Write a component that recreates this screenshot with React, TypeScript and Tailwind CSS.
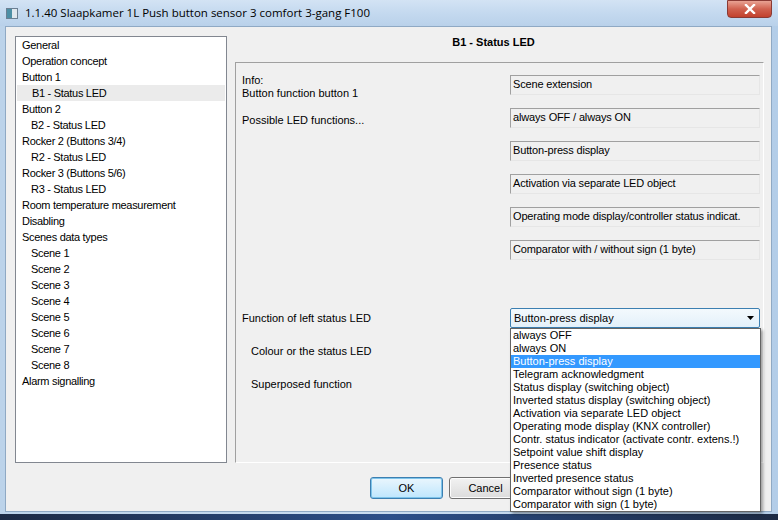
import React from "react";

const tree: { label: string; indent?: boolean; selected?: boolean }[] = [
  { label: "General" },
  { label: "Operation concept" },
  { label: "Button 1" },
  { label: "B1 - Status LED", indent: true, selected: true },
  { label: "Button 2" },
  { label: "B2 - Status LED", indent: true },
  { label: "Rocker 2 (Buttons 3/4)" },
  { label: "R2 - Status LED", indent: true },
  { label: "Rocker 3 (Buttons 5/6)" },
  { label: "R3 - Status LED", indent: true },
  { label: "Room temperature measurement" },
  { label: "Disabling" },
  { label: "Scenes data types" },
  { label: "Scene 1", indent: true },
  { label: "Scene 2", indent: true },
  { label: "Scene 3", indent: true },
  { label: "Scene 4", indent: true },
  { label: "Scene 5", indent: true },
  { label: "Scene 6", indent: true },
  { label: "Scene 7", indent: true },
  { label: "Scene 8", indent: true },
  { label: "Alarm signalling" },
];

const ledFunctions = [
  "always OFF / always ON",
  "Button-press display",
  "Activation via separate LED object",
  "Operating mode display/controller status indicat.",
  "Comparator with / without sign (1 byte)",
];

const options = [
  "always OFF",
  "always ON",
  "Button-press display",
  "Telegram acknowledgment",
  "Status display (switching object)",
  "Inverted status display (switching object)",
  "Activation via separate LED object",
  "Operating mode display (KNX controller)",
  "Contr. status indicator (activate contr. extens.!)",
  "Setpoint value shift display",
  "Presence status",
  "Inverted presence status",
  "Comparator without sign (1 byte)",
  "Comparator with sign (1 byte)",
];

function Field({ text }: { text: string }) {
  return (
    <div className="h-[20px] w-[250px] shrink-0 border border-[#a0a0a0] border-r-[#e6e6e6] border-b-[#e6e6e6] bg-[#f0f0f0] px-[2px] pt-[1px] leading-[14px] tracking-[-0.15px] whitespace-nowrap overflow-hidden">
      {text}
    </div>
  );
}

function Button({ label, focused }: { label: string; focused?: boolean }) {
  return (
    <div
      className={
        "flex h-[22px] w-[73px] items-center justify-center rounded-[3px] border " +
        (focused
          ? "border-[#3c7fb1] bg-gradient-to-b from-[#eaf6fd] to-[#bee6fd] shadow-[inset_0_0_0_1px_#7ec4ea]"
          : "border-[#707070] bg-gradient-to-b from-[#f2f2f2] to-[#dcdcdc] shadow-[inset_0_0_0_1px_#fcfcfc]")
      }
    >
      {label}
    </div>
  );
}

export default function App() {
  return (
    <div
      className="relative flex h-[520px] w-[778px] flex-col overflow-hidden bg-[#1c2a44] text-[11px] text-black"
      style={{ fontFamily: '"Liberation Sans", Arial, sans-serif' }}
    >
      {/* title bar */}
      <div className="flex h-[26px] shrink-0 items-center bg-gradient-to-b from-[#d3e3f4] via-[#c4d9ef] to-[#b9d1ea] pl-[6px]">
        <div className="mr-[7px] flex h-[11px] w-[12px] border border-[#6b7f92] bg-[#dfe7ee]">
          <div className="h-full w-[5px] bg-[#4d8fa5]" />
        </div>
        <span className="text-[11.5px] text-black" style={{ fontFamily: '"Open Sans", "Liberation Sans", sans-serif' }}>
          1.1.40 Slaapkamer 1L Push button sensor 3 comfort 3-gang F100
        </span>
        <div className="ml-auto mr-[6px] flex h-[18px] w-[45px] -translate-y-[4px] items-center justify-center rounded-b-[4px] border border-[#8a3a34] bg-gradient-to-b from-[#e8a293] via-[#d0614f] to-[#c2402c]">
          <svg width="12" height="10" viewBox="0 0 12 10">
            <path d="M2 1 L10 9 M10 1 L2 9" stroke="#fff" strokeWidth="2.4" strokeLinecap="square" />
          </svg>
        </div>
      </div>

      {/* window frame */}
      <div className="flex h-[488px] shrink-0 bg-gradient-to-r from-[#bcd3ea] via-[#c9dcf0] to-[#b3cde8] px-[5px] pr-[6px] pb-[2px]">
        <div className="flex flex-1 flex-col border border-[#8fa9c4] bg-[#f0f0f0] pt-[9px] pl-[9px] pr-[7px]">
          <div className="flex h-[427px] gap-[8px]">
            {/* tree */}
            <div className="w-[212px] border border-[#828790] bg-white tracking-[-0.3px]">
              {tree.map((t) => (
                <div
                  key={t.label}
                  className={
                    "h-[16px] leading-[16px] whitespace-nowrap " +
                    (t.indent ? "pl-[15px] " : "pl-[6px] ") +
                    (t.selected ? "mx-[1px] bg-[#ebebeb]" : "")
                  }
                >
                  {t.label}
                </div>
              ))}
            </div>

            {/* right */}
            <div className="flex flex-1 flex-col">
              <div className="flex h-[26px] justify-center pr-[12px] leading-[13px] font-bold">B1 - Status LED</div>
              <div className="flex flex-1 flex-col border border-[#a0a0a0] border-r-white border-b-white pt-[12px] pl-[6px]">
                <div className="flex h-[20px]">
                  <div className="-mt-[1px] w-[268px] leading-[13px]">
                    <div>Info:</div>
                    <div>Button function button 1</div>
                  </div>
                  <Field text="Scene extension" />
                </div>
                <div className="mt-[13px] flex h-[20px]">
                  <div className="w-[268px] pt-[6px] leading-[13px]">Possible LED functions...</div>
                  <Field text={ledFunctions[0]} />
                </div>
                {ledFunctions.slice(1).map((f) => (
                  <div key={f} className="mt-[13px] flex h-[20px]">
                    <div className="w-[268px]" />
                    <Field text={f} />
                  </div>
                ))}
                <div className="mt-[48px] flex h-[20px] items-center">
                  <div className="w-[268px]">Function of left status LED</div>
                  <div className="flex h-[20px] w-[250px] items-center rounded-[2px] border border-[#3c7fb1] bg-gradient-to-b from-[#f3f9fd] to-[#e3f0fa] px-[3px]">
                    <span className="flex-1">Button-press display</span>
                    <svg width="7" height="4" viewBox="0 0 7 4" className="mr-[2px]">
                      <path d="M0 0 H7 L3.5 4 Z" fill="#000" />
                    </svg>
                  </div>
                </div>
                <div className="mt-[13px] flex h-[20px] items-center pl-[9px]">Colour or the status LED</div>
                <div className="mt-[13px] flex h-[20px] items-center pl-[9px]">Superposed function</div>
              </div>
            </div>
          </div>

          <div className="mt-[14px] flex gap-[6px] pl-[355px]">
            <Button label="OK" focused />
            <Button label="Cancel" />
          </div>
        </div>
      </div>

      {/* taskbar strip */}
      <div className="h-[6px] shrink-0 bg-gradient-to-r from-[#1c2a44] via-[#2c4f8a] to-[#1c2a44]" />

      {/* open dropdown list */}
      <div className="absolute left-[510px] top-[328px] w-[251px] border border-[#646464] bg-white shadow-[2px_2px_3px_rgba(0,0,0,0.35)]">
        {options.map((o) => (
          <div
            key={o}
            className={
              "h-[13px] px-[2px] leading-[13px] whitespace-nowrap " +
              (o === "Button-press display" ? "bg-[#3399ff] text-white" : "")
            }
          >
            {o}
          </div>
        ))}
      </div>
    </div>
  );
}
